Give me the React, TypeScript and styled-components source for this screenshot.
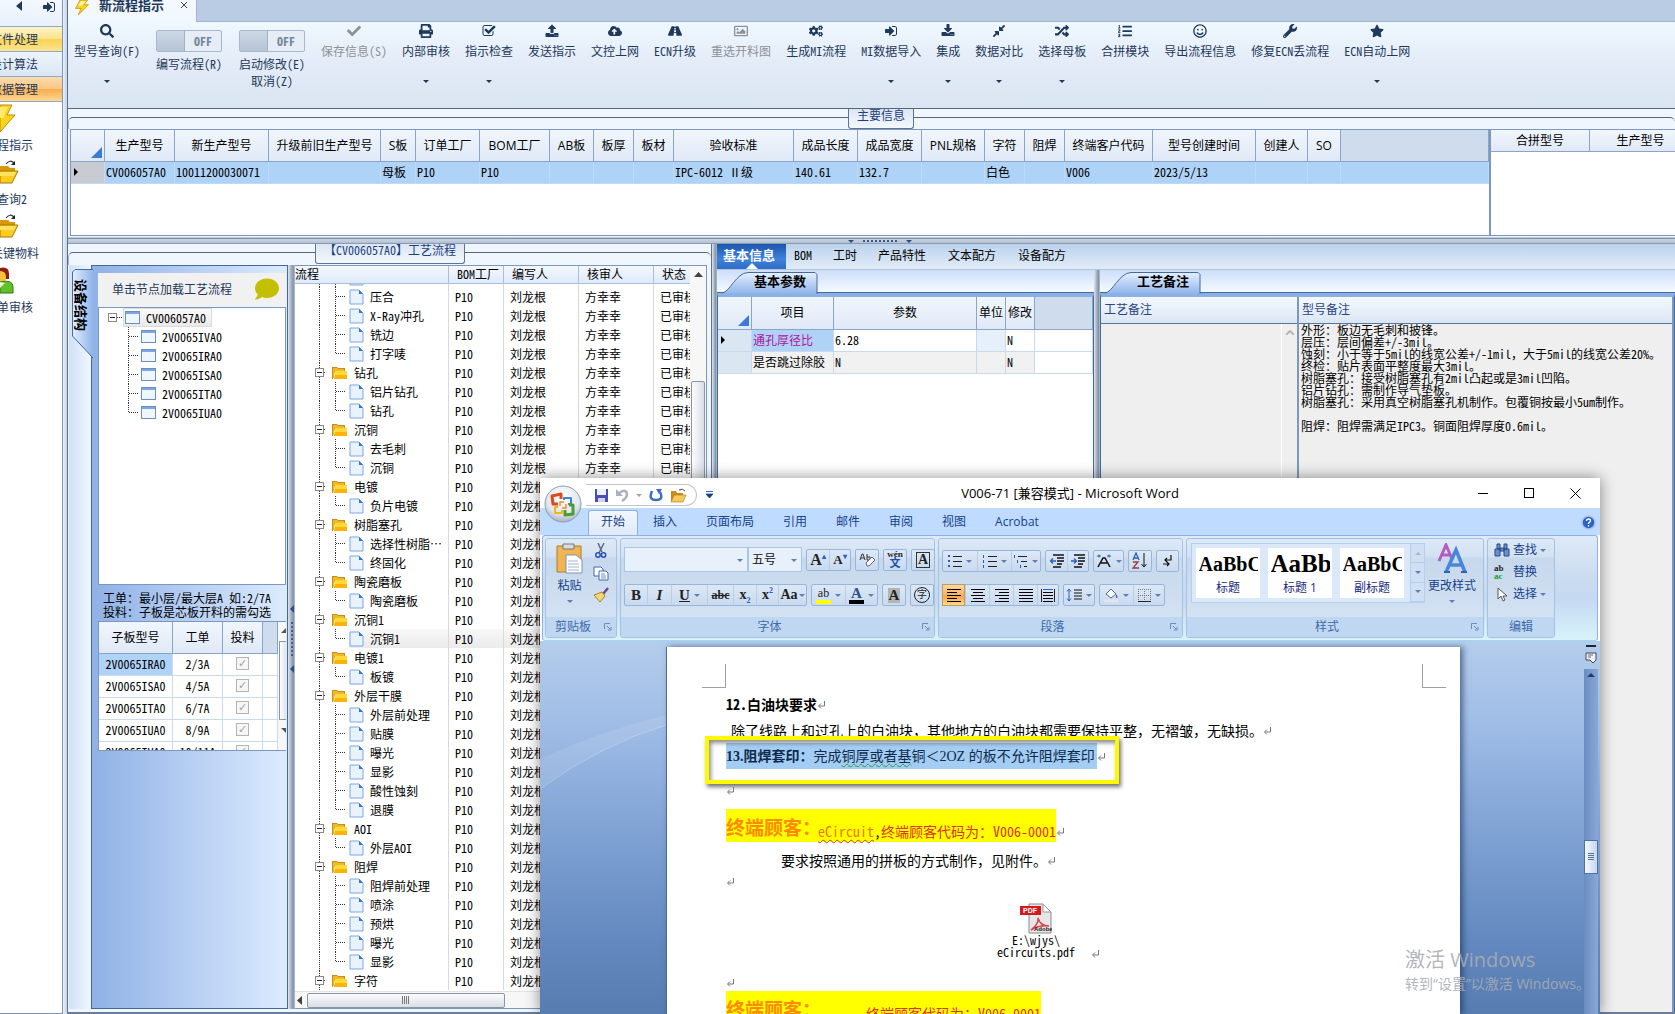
import React from "react";
import styled, { createGlobalStyle, css } from "styled-components";
import {
  FaSearch, FaCheck, FaPrint, FaCloudUploadAlt, FaRoad, FaRegImage, FaCogs, FaCompressAlt,
  FaRandom, FaListOl, FaRegSmile, FaWrench, FaStar, FaComment,
} from "react-icons/fa";

const SUN = `"Noto Sans Mono CJK SC", "Liberation Sans", "Noto Sans CJK SC", sans-serif`;
const UI = `"Open Sans", "Noto Sans CJK SC", sans-serif`;
const SERIF = `"Liberation Serif", "Noto Sans CJK SC", serif`;

const Global = createGlobalStyle`
  * { box-sizing: border-box; }
  html, body { margin: 0; height: 100%; overflow: hidden; }
  #root { height: 100%; }
  body { font: 12px/16px ${SUN}; color: #000; background: #dfe9f5; }
  button { font: inherit; color: inherit; background: none; border: 0; padding: 0; margin: 0; cursor: pointer; }
  table { border-collapse: separate; border-spacing: 0; table-layout: fixed; }
  th { font-weight: normal; }
  svg { display: block; flex: none; }
`;

/* ---------- shell ---------- */
const Desktop = styled.div`
  position: relative; display: flex; height: 100vh; overflow: hidden; white-space: nowrap;
`;
const Sidebar = styled.aside`
  flex: none; width: 63px; display: flex; flex-direction: column; background: #fff;
  border-right: 1px solid #7d97bd; border-bottom: 1px solid #7d97bd; overflow: hidden; color: #1e395b;
`;
const SideHead = styled.div`
  height: 27px; flex: none; display: flex; align-items: flex-start; justify-content: flex-end; gap: 20px;
  padding: 0 6px 0 0; border-bottom: 1px solid #8ea9cf; background: linear-gradient(#f4f8fe, #e7f0fb);
`;
const SideGroup = styled.button<{ $tone: "gold" | "blue" | "orange" }>`
  height: 25px; flex: none; display: flex; justify-content: flex-end; align-items: center; padding-right: 24px;
  border-bottom: 1px solid #8ea9cf; color: #1e395b;
  background: ${p => ({
    gold: "linear-gradient(#fdf3c8, #fbe48e 48%, #f9d155 50%, #fce58d)",
    blue: "linear-gradient(#edf4fc, #dbe7f5)",
    orange: "linear-gradient(#fbdcae, #fbc684 48%, #f9ab4b 50%, #fcd995)",
  })[p.$tone]};
`;
const SideItem = styled.button<{ $end: number }>`
  height: 54px; flex: none; display: flex; flex-direction: column; align-items: flex-end; color: #1e395b;
  padding: 2px ${p => p.$end}px 0 0; gap: 4px; overflow: visible;
  & > svg { align-self: flex-start; }
`;
const Gutter = styled.div`flex: none; width: 4px; background: linear-gradient(90deg, #e9f0f9, #c6d3e4);`;
const Main = styled.main`
  flex: 1; min-width: 0; display: flex; flex-direction: column; border-left: 1px solid #5b6e8c;
  border-bottom: 2px solid #6a7c98;
`;
const TabStrip = styled.div`height: 22px; flex: none; background: #b9cce4; border-bottom: 1px solid #9fb5d2; display: flex;`;
const PageTab = styled.div`
  width: 129px; height: 23px; background: linear-gradient(#f5f9fe, #f0f7fe); display: flex; align-items: flex-start;
  padding: 0 8px 0 6px; gap: 9px; font: bold 13px/10px ${SUN}; color: #1e395b; border-right: 1px solid #9fb5d2;
  span { flex: 1; }
`;
const Toolbar = styled.div`
  height: 86px; flex: none; display: flex; gap: 15px; padding: 0 6px; color: #1e395b;
  background: linear-gradient(#eff8fe, #e4ecf8 45%, #d9e5f1);
`;
const Tool = styled.button<{ $off?: boolean }>`
  display: flex; flex-direction: column; align-items: center; padding-top: 2px;
  color: ${p => (p.$off ? "#8e9196" : "#1e395b")};
  & > svg:first-child { height: 14px; width: 14px; margin-bottom: 5px; }
`;
const Caret = styled.i<{ $top?: number; $c?: string }>`
  display: inline-block; width: 0; height: 0; border: 3px solid transparent; border-bottom: 0;
  border-top-color: ${p => p.$c || "#1e395b"}; margin-top: ${p => p.$top || 0}px; flex: none;
`;
const Toggle = styled.label`
  width: 68px; display: flex; flex-direction: column; align-items: center; padding-top: 8px; text-align: center;
  line-height: 17px; gap: 3px;
`;
const Switch = styled.input`
  appearance: none; margin: 0; width: 66px; height: 22px; border: 1px solid #a9b8cb; border-radius: 2px; background: #e6edf6;
  display: flex; align-items: center;
  &::before { content: ""; width: 27px; height: 20px; background: linear-gradient(#cdd8e5, #b6c4d6); border-right: 1px solid #a0b0c5; }
  &::after { content: "OFF"; flex: 1; text-align: center; font: bold 12px/18px ${SUN}; color: #76869c; }
`;

/* ---------- group caption ---------- */
const CaptionRow = styled.div<{ $edge?: boolean }>`
  display: flex; height: 21px; flex: none; background: #f0f6fe;
  ${p => p.$edge && css`border-top: 1px solid #5b6577;`}
`;
const CapLine = styled.div<{ $g?: number; $side: "l" | "r" }>`
  flex: ${p => p.$g || 1} 1 0; margin-top: 8px; border-top: 1px solid #5b6577;
  ${p => (p.$side === "l"
    ? css`border-top-left-radius: 5px; border-left: 1px solid #9fb0c8;`
    : css`border-top-right-radius: 5px;`)}
`;
const Cap = styled.div`
  height: 20px; border: 1px solid #5f7396; border-top-width: 0; border-radius: 0 0 3px 3px; padding: 0 8px; line-height: 12px; color: #1e3f7f;
  background: linear-gradient(#dbe6f3, #f3f8fe);
`;

/* ---------- grids ---------- */
const Grids = styled.div`display: flex; height: 108px; flex: none; padding: 0 0 1px 2px; background: #eaf2fc;`;
const GridBox = styled.div<{ $w?: number }>`
  ${p => (p.$w ? css`flex: none; width: ${p.$w}px;` : css`flex: 1; min-width: 0;`)}
  background: #fff; border: 1px solid #7b98c0; border-right-width: ${p => (p.$w ? 0 : 1)}px; overflow: hidden;
`;
const Th = styled.th<{ $h?: number; $blank?: boolean }>`
  height: ${p => p.$h || 32}px; padding: 0; overflow: hidden; font-family: ${UI}; text-align: center;
  border-right: 1px solid #8ba4c8; border-bottom: 1px solid #8ba4c8;
  background: ${p => (p.$blank ? "#cfdcee" : "linear-gradient(#f1f6fd, #dfe9f6)")};
`;
const Corner = styled.span`
  display: block; margin: 14px 2px 0 auto; width: 0; height: 0; border-left: 11px solid transparent; border-bottom: 11px solid #3b7ad9;
`;
const Td = styled.td<{ $bg?: string; $center?: boolean; $color?: string; $line?: string }>`
  height: 22px; padding: 0 ${p => (p.$center ? 0 : 1)}px 2px; overflow: hidden; line-height: 16px;
  text-align: ${p => (p.$center ? "center" : "left")}; color: ${p => p.$color || "#000"};
  background: ${p => p.$bg || "#fff"};
  border-right: 1px solid ${p => p.$line || "#c9daf0"}; border-bottom: 1px solid ${p => p.$line || "#c9daf0"};
`;
const RowMark = styled.i`
  display: block; width: 0; height: 0; border: 4px solid transparent; border-left-color: #000; border-right: 0; margin-left: 2px;
`;
const HSplit = styled.div`
  height: 7px; flex: none; display: flex; justify-content: center; align-items: center; gap: 9px; padding: 1px 0 0 16px;
  background: linear-gradient(#e3eaf3, #5f7290 28%, #cbd5e2 36%, #b5c2d3 80%, #74869f);
`;
const Dots = styled.span<{ $v?: boolean }>`
  ${p => (p.$v ? css`height: 34px; border-left: 2px dotted #3d5a94;` : css`width: 34px; border-top: 2px dotted #3d5a94;`)}
`;

/* ---------- lower area ---------- */
const Lower = styled.div`flex: 1; min-height: 0; display: flex;`;
const FlowGroup = styled.section`flex: none; width: 644px; display: flex; flex-direction: column; background: #f0f6fe; border-right: 1px solid #5f7396;`;
const FlowBody = styled.div`flex: 1; min-height: 0; display: flex; padding: 0 4px 3px 1px;`;
const VStrip = styled.div`flex: none; width: 22px; padding-top: 4px; background: linear-gradient(90deg, #cfe0f9, #f1f7ff);`;
const VTab = styled.button`
  position: relative; display: block; margin-left: 2px; width: 20px; height: 90px; writing-mode: vertical-rl; text-orientation: sideways;
  font: bold 13px/20px ${SUN}; text-align: left; padding-top: 10px;
  svg { position: absolute; left: 0; top: 0; z-index: 0; }
  span { position: relative; }
`;
const DevicePanel = styled.div`
  flex: none; width: 197px; display: flex; flex-direction: column; padding: 7px 1px 0 6px; border: 1px solid #456a9f;
  background: linear-gradient(90deg, #8fb1e6, #dcebff);
`;
const Hint = styled.div`
  height: 34px; flex: none; display: flex; align-items: center; justify-content: space-between; background: #f1f1f1;
  padding: 0 7px 2px 14px; color: #1e395b;
`;
const TreeBox = styled.div`height: 278px; flex: none; background: #fff; border: 1px solid #7b98c0;`;
const TreeRow = styled.div<{ $child?: boolean }>`height: 19px; display: flex; align-items: center; padding-left: 9px;`;
const TreeName = styled.button<{ $sel?: boolean }>`
  display: flex; align-items: center; gap: 6px; height: 19px; line-height: 15px; padding: 0 5px 0 1px; border: 1px solid transparent;
  ${p => p.$sel && css`background: linear-gradient(#fbfbfb, #e9e9e9); border-color: #dcdcdc;`}
`;
const Note = styled.p`margin: 6px 0 2px; padding-left: 5px; font-size: 12px; line-height: 14px; white-space: nowrap;`;
const SubGrid = styled.div`height: 130px; flex: none; display: flex; border: 1px solid #7b98c0; border-right: 0; background: #fff; overflow: hidden;`;
const Check = styled.input`
  appearance: none; display: block; margin: 0 auto; width: 13px; height: 13px; border: 1px solid #b4b4b4; background: #f6f6f6;
  &::after { content: "✓"; display: block; font: bold 11px/11px "DejaVu Sans", sans-serif; color: #a3a3a3; text-align: center; }
`;
const ThinScroll = styled.div`
  flex: 1; display: flex; flex-direction: column; align-items: flex-end; background: #f7f7f7; overflow: hidden; padding-top: 6px; gap: 8px;
  i { flex: none; width: 7px; height: 79px; border: 1px solid #8a95a5; border-right: 0; background: linear-gradient(90deg, #fdfdfe, #dfe4ec); }
`;
const VSplit = styled.div<{ $w: number }>`
  flex: none; width: ${p => p.$w}px; display: flex; flex-direction: column; align-items: center; gap: 9px;
  background: linear-gradient(90deg, #dfe6ee, #a5b1c1 45%, #8593a8 75%, #b6c3d4);
`;
const SideCaret = styled.i`width: 0; height: 0; border: 4px solid transparent; border-right-color: #2b4c8c; border-left: 0;`;

const FlowPane = styled.div`flex: 1; min-width: 0; display: flex; flex-direction: column; background: #fff; border: 1px solid #7b98c0; border-left: 0;`;
const FlowMain = styled.div`flex: 1; min-height: 0; display: flex;`;
const FlowClip = styled.div`flex: 1; min-width: 0; overflow: hidden; display: flex; flex-direction: column;`;
const FlowRows = styled.div`flex: 1; min-height: 0; overflow: hidden; display: flex; flex-direction: column; justify-content: flex-end; padding-bottom: 1px;`;
const FlowTable = styled.table`width: 414px; flex: none;`;
const Fh = styled.th<{ $p: number }>`
  height: 18px; padding: 0 0 2px ${p => p.$p}px; text-align: left; line-height: 15px; overflow: hidden;
  background: linear-gradient(#f4f8fd, #dfeafa); border-right: 1px solid #a9bfdf; border-bottom: 1px solid #a9bfdf;
`;
const Fd = styled.td<{ $sel?: boolean }>`
  height: 19px; padding: 0 0 0 6px; overflow: hidden; line-height: 17px; border-right: 1px solid #d9d9d9;
  background: ${p => (p.$sel ? "linear-gradient(#f8f8f8, #ebebeb)" : "#fff")};
`;
const FlowName = styled.div`display: flex; align-items: center; gap: 5px; height: 19px; margin-left: -6px; background: #fff;`;
const FlowLabel = styled.span<{ $sel?: boolean; $leaf: boolean }>`
  flex: 1; display: flex; align-items: center; gap: 6px; height: 19px; overflow: hidden; margin-left: ${p => (p.$leaf ? -5 : 0)}px;
  background: ${p => (p.$sel ? "linear-gradient(#f8f8f8, #ebebeb)" : "#fff")};
`;
const VBar = styled.div`
  flex: none; width: 16px; background: #f7f7f8; display: flex; flex-direction: column; align-items: center; padding-top: 6px;
  b { margin-top: 104px; width: 14px; flex: 1; border: 1px solid #8a95a5; border-radius: 2px; background: linear-gradient(90deg, #fbfcfd, #d9dfe8); }
`;
const HBar = styled.div`
  height: 17px; flex: none; display: flex; align-items: center; gap: 5px; padding-left: 2px; background: #f7f7f8; border-top: 1px solid #e3e3e3;
  b { width: 198px; height: 15px; border: 1px solid #8a95a5; border-radius: 2px; background: linear-gradient(#fbfcfd, #d9dfe8);
    display: flex; justify-content: center; align-items: center; }
  b i { width: 8px; height: 8px; background: repeating-linear-gradient(90deg, #777 0 1px, transparent 1px 2px); }
`;

/* ---------- right side ---------- */
const Right = styled.section`flex: 1; min-width: 0; display: flex; flex-direction: column;`;
const InfoTabs = styled.div`height: 26px; flex: none; display: flex; background: linear-gradient(#bcd2ec, #e1ecf8); border-bottom: 1px solid #b4c7d9;`;
const InfoTab = styled.button<{ $on?: boolean; $l: number }>`
  position: relative; line-height: 22px; display: flex; padding: 0 0 0 ${p => p.$l}px;
  ${p => p.$on && css`
    width: 69px; font: bold 13px/22px ${SUN}; color: #fff; background: linear-gradient(#1b55ad, #3f83dc 60%, #2f6cc6);
    &::after { content: ""; position: absolute; left: 29px; bottom: 0; border: 6px solid transparent; border-top: 0; border-bottom-color: #fff; }
  `}
`;
const Panes = styled.div`flex: 1; min-height: 0; display: flex;`;
const Pane = styled.div<{ $w?: number }>`
  ${p => (p.$w ? css`flex: none; width: ${p.$w}px;` : css`flex: 1; min-width: 0;`)}
  display: flex; flex-direction: column;
`;
const PaneTabs = styled.div`height: 23px; flex: none; background: linear-gradient(#cbdefa, #f6faff); padding: 2px 0 0 5px; border-bottom: 1px solid #456a9f;`;
const PaneTab = styled.button`
  position: relative; display: block; width: 96px; height: 21px; font: bold 13px/18px ${SUN}; text-align: left; padding: 0 0 3px 32px;
  svg { position: absolute; left: 0; top: 0; }
  span { position: relative; }
`;
const PaneBody = styled.div`
  flex: 1; min-height: 0; border: 1px solid #456a9f; border-top: 4px solid #8bb0e6; border-bottom: 0; background: #fff; display: flex; overflow: hidden;
`;
const Memo = styled.div<{ $w?: number }>`
  ${p => (p.$w ? css`flex: none; width: ${p.$w}px;` : css`flex: 1; min-width: 0;`)}
  display: flex; flex-direction: column; border-right: 2px solid #7b98c0; background: #efefef;
`;
const MemoHead = styled.label`
  height: 27px; flex: none; line-height: 23px; padding-left: 3px; color: #2a4480; background: linear-gradient(#f4f9ff, #dbe6f3); border-bottom: 1px solid #57769f;
`;
const MemoBody = styled.div`flex: 1; display: flex; min-height: 0;`;
const MemoText = styled.textarea`
  flex: 1; min-width: 0; border: 0; margin: 0; padding: 0 2px; resize: none; outline: 0; background: #efefef; font: 12px/12px ${SUN};
  white-space: pre; overflow: hidden;
`;
const MemoScroll = styled.div`width: 16px; border-left: 1px solid #fff; padding: 6px 0 0 4px;`;

/* ---------- word window ---------- */
const WordWin = styled.section`
  position: absolute; left: 540px; right: 75px; top: 478px; bottom: 0; display: flex; flex-direction: column; background: #fff;
  box-shadow: 0 0 14px rgba(0, 0, 0, 0.45); font: 12px/16px ${UI}; color: #15428b;
`;
const TitleBar = styled.header`
  height: 30px; flex: none; display: grid; grid-template-columns: 1fr auto 1fr; align-items: center; color: #000; font-size: 13px;
`;
const OfficeButton = styled.button`position: absolute; left: 4px; top: 7px; z-index: 2;`;
const Quick = styled.div`display: flex; align-items: center; gap: 9px; padding: 4px 0 0 46px;`;
const QuickPill = styled.div`
  flex: none; width: 111px; height: 22px; display: flex; align-items: center; gap: 7px; padding-left: 8px; border: 1px solid #c3c7cd;
  border-left: 0; border-radius: 0 11px 11px 0;
`;
const WinButtons = styled.div`display: flex; justify-content: flex-end; padding-right: 2px; button { width: 46px; height: 30px; display: grid; place-items: center; }`;
const RibbonTabs = styled.nav`
  height: 27px; flex: none; display: flex; padding: 2px 4px 0 48px; background: #bfdbff; align-items: stretch;
`;
const RibbonTab = styled.button<{ $on?: boolean }>`
  padding: 0 14px 2px; margin-right: 1px; color: #15428b; line-height: 20px; border-radius: 3px 3px 0 0;
  ${p => p.$on && css`background: linear-gradient(#f2f7fe, #dfeaf8); border: 1px solid #8db2e3; border-bottom: 0; padding: 0 12px 2px;`}
`;
const HelpSlot = styled.button`margin-left: auto; align-self: center;`;
const Ribbon = styled.div`
  height: 106px; flex: none; display: flex; gap: 3px; margin: 0 2px; padding: 2px; border: 1px solid #8db2e3; border-bottom-color: #9fd8ee; border-radius: 3px;
  background: linear-gradient(#dfeaf7, #cbdcf0 40%, #c5d9f1 60%, #d8f3fb);
`;
const RGroup = styled.div<{ $w: number }>`
  flex: none; width: ${p => p.$w}px; display: flex; flex-direction: column; border: 1px solid #a5c2e2; border-radius: 3px;
  background: linear-gradient(#dde9f6, #d2e1f2 18%, #c7d8ec 20%, #d6e5f5);
`;
const RBody = styled.div<{ $col?: boolean }>`flex: 1; min-height: 0; display: flex; flex-direction: ${p => (p.$col ? "column" : "row")};`;
const RCap = styled.div`
  height: 20px; flex: none; display: flex; align-items: center; background: #bfd7f1; color: #3e6aaa; line-height: 18px; border-radius: 0 0 3px 3px;
  span { flex: 1; text-align: center; }
  svg { margin: 0 4px; }
`;
const RRow = styled.div`display: flex; align-items: center; gap: 4px; padding: 0 3px;`;
const RCluster = styled.div`display: flex; height: 22px; border: 1px solid #98b6dc; border-radius: 2px; background: linear-gradient(#dce8f6, #c9daef);`;
const RBtn = styled.button<{ $w?: number; $on?: boolean }>`
  width: ${p => p.$w || 22}px; display: flex; align-items: center; justify-content: center; gap: 4px; color: #222;
  & + & { border-left: 1px solid #b9cde6; }
  ${p => p.$on && css`background: linear-gradient(#fbd9a3, #f9a94a 60%, #fdd98a); border: 1px solid #c29b5c; margin: -1px 0 -1px -1px;`}
`;
const G = styled.span<{ $s?: number; $b?: boolean; $i?: boolean; $u?: boolean; $x?: boolean; $c?: string }>`
  font: ${p => (p.$i ? "italic " : "")}${p => (p.$b === false ? "normal" : "bold")} ${p => p.$s || 15}px/18px ${SERIF};
  color: ${p => p.$c || "#222"};
  text-decoration: ${p => (p.$u ? "underline" : p.$x ? "line-through" : "none")};
  sub, sup { font-size: 8px; line-height: 0; color: #2b5fb8; }
`;
const Combo = styled.select<{ $w: number }>`
  width: ${p => p.$w}px; height: 25px; appearance: none; border: 1px solid #a9c5e8; border-radius: 0; background: #e8f0fb; padding: 0 3px;
  font: 12px/20px ${UI}; color: #111; margin: 0;
`;
const ComboWrap = styled.span`position: relative; display: flex; & > i { position: absolute; right: 5px; top: 12px; }`;
const Stack = styled.button`display: flex; flex-direction: column; align-items: center; color: #15428b;`;
const IconCol = styled.div`display: flex; flex-direction: column; gap: 6px; button { display: block; }`;
const Gallery = styled.div`display: flex; gap: 8px; height: 60px; padding: 4px 0 4px 4px; border: 1px solid #b6cfee; background: #dae8f8;`;
const StyleCard = styled.button`
  width: 64px; height: 50px; background: #fff; display: flex; flex-direction: column; align-items: center; overflow: hidden; color: #1a2a80;
  line-height: 16px;
`;
const Sample = styled.span<{ $s: number }>`
  display: block; width: 59px; overflow: hidden; text-align: left; font: bold ${p => p.$s}px/32px ${SERIF}; color: #000;
`;
const GScroll = styled.div`
  margin: -4px 0 -4px -2px; width: 14px; display: flex; flex-direction: column; border-left: 1px solid #b6cfee;
  button { flex: 1; display: grid; place-items: center; border-bottom: 1px solid #b6cfee; background: #cfe0f4; }
`;
const EditBtn = styled.button`display: flex; align-items: center; gap: 3px; height: 22px; color: #15428b;`;

const DocArea = styled.div`
  position: relative; flex: 1; min-height: 0; display: flex; justify-content: flex-end; padding-top: 6px; overflow: hidden;
  background: linear-gradient(#b4cdec, #a0bde6 22%, #86a8d8 45%, #6389c0 80%, #567cb0);
  & > svg { position: absolute; left: 0; top: 0; }
`;
const Paper = styled.article`
  position: relative; flex: 1; margin: 0 140px 0 126px; background: #fff; border-left: 1px solid #4b6c9b; color: #000;
  box-shadow: 3px 0 6px rgba(20, 45, 90, 0.6); padding-left: 59px; overflow: hidden; font: 14px/26px ${SUN};
`;
const Crops = styled.div`
  display: flex; justify-content: space-between; height: 24px; margin: 17px 14px 3px -24px;
  i { width: 24px; border: 0 solid #a0a0a0; border-bottom-width: 1px; }
  i:first-child { border-right-width: 1px; }
  i:last-child { border-left-width: 1px; }
`;
const Para = styled.p<{ $h?: number; $mt?: number; $in?: number; $low?: boolean }>`
  position: relative; margin: ${p => p.$mt || 0}px 0 0; padding-left: ${p => p.$in || 0}px; height: ${p => p.$h || 26}px;
  line-height: ${p => p.$h || 26}px; display: flex; align-items: ${p => (p.$low ? "flex-end" : "center")};
  ${p => p.$low && css`& > svg { margin-bottom: 6px; }`}
`;
const Sel = styled.span`background: #a3cdf2; color: #0f2a4d; height: 26px; line-height: 28px; font-family: ${SERIF}; padding-right: 2px;
  u { text-decoration: underline wavy #2c9a4b 1px; text-underline-offset: 2px; }`;
const Callout = styled.div`
  position: absolute; left: -21px; top: -7px; width: 414px; height: 48px; border: 4px solid #fdf900;
  box-shadow: 2px 3px 4px rgba(0, 0, 0, 0.55), inset 2px 3px 4px rgba(0, 0, 0, 0.45);
`;
const Mark = styled.span`
  background: #ff0; height: 33px; display: flex; align-items: flex-end; line-height: 22px; color: #e0301e;
  strong { font: bold 19px/26px ${SERIF}; color: #ff8a00; width: 92px; }
  u { color: #f07800; text-decoration: underline wavy #c0392b 1px; text-underline-offset: 2px; }
  em { font-style: normal; color: #000; }
`;
const Space = styled.span`width: 48px;`;
const Attach = styled.div`
  display: flex; align-items: flex-end; margin: 8px 0 2px 271px; gap: 16px; height: 58px; font-size: 12px; line-height: 12px;
  a { width: 78px; display: flex; flex-direction: column; align-items: center; color: #000; text-decoration: none; text-align: center; gap: 0; }
`;
const WordScroll = styled.div`
  position: absolute; right: 2px; top: 4px; bottom: 0; width: 14px; display: flex; flex-direction: column; align-items: center; gap: 5px;
`;
const Track = styled.div`
  flex: 1; width: 14px; background: linear-gradient(90deg, #6a8dc2, #89a8d6); display: flex; flex-direction: column; align-items: center; padding-top: 4px;
  b { margin-top: 163px; width: 14px; height: 34px; border: 1px solid #52709f; background: linear-gradient(90deg, #f4f8fd, #c5d6ee); display: grid; place-items: center; }
  b i { width: 6px; height: 8px; background: repeating-linear-gradient(#54719f 0 1px, transparent 1px 2px); }
`;
const Activate = styled.div`
  position: absolute; left: 1405px; bottom: 20px; color: rgba(168, 172, 180, 0.9); font: 14px/20px ${UI};
  strong { display: block; font: normal 20px/28px ${UI}; }
`;

/* ---------- drawings ---------- */
const Fa = ({ d }: { d: string }) => <svg viewBox="0 0 1792 1792" width="14" height="14" fill="currentColor"><path d={d} /></svg>;
const P_CHECKSQ = "M1472 930v318q0 119-84.5 203.5t-203.5 84.5h-832q-119 0-203.5-84.5t-84.5-203.5v-832q0-119 84.5-203.5t203.5-84.5h832q63 0 117 25 15 7 18 23 3 17-9 29l-49 49q-10 10-23 10-3 0-9-2-23-6-45-6h-832q-66 0-113 47t-47 113v832q0 66 47 113t113 47h832q66 0 113-47t47-113v-254q0-13 9-22l64-64q10-10 23-10 6 0 12 3 20 8 20 29zm231-489l-814 814q-24 24-57 24t-57-24l-430-430q-24-24-24-57t24-57l110-110q24-24 57-24t57 24l263 263 647-647q24-24 57-24t57 24l110 110q24 24 24 57t-24 57z";
const P_SIGNIN = "M1312 896q0 26-19 45l-544 544q-19 19-45 19t-45-19-19-45v-288h-448q-26 0-45-19t-19-45v-384q0-26 19-45t45-19h448v-288q0-26 19-45t45-19 45 19l544 544q19 19 19 45zm352-352v704q0 119-84.5 203.5t-203.5 84.5h-320q-13 0-22.5-9.5t-9.5-22.5q0-4-1-20t-.5-26.5 3-23.5 10-19.5 20.5-6.5h320q66 0 113-47t47-113v-704q0-66-47-113t-113-47h-312l-11.5-1-11.5-3-8-5.5-7-9-2-13.5q0-4-1-20t-.5-26.5 3-23.5 10-19.5 20.5-6.5h320q119 0 203.5 84.5t84.5 203.5z";
const P_UPLOAD = "M1344 1472q0-26-19-45t-45-19-45 19-19 45 19 45 45 19 45-19 19-45zm256 0q0-26-19-45t-45-19-45 19-19 45 19 45 45 19 45-19 19-45zm128-224v320q0 40-28 68t-68 28h-1472q-40 0-68-28t-28-68v-320q0-40 28-68t68-28h427q21 56 70.5 92t110.5 36h256q61 0 110.5-36t70.5-92h427q40 0 68 28t28 68zm-325-648q-17 40-59 40h-256v448q0 26-19 45t-45 19h-256q-26 0-45-19t-19-45v-448h-256q-42 0-59-40-17-39 14-69l448-448q18-19 45-19t45 19l448 448q31 30 14 69z";
const P_DOWNLOAD = "M1344 1344q0-26-19-45t-45-19-45 19-19 45 19 45 45 19 45-19 19-45zm256 0q0-26-19-45t-45-19-45 19-19 45 19 45 45 19 45-19 19-45zm128-224v320q0 40-28 68t-68 28h-1472q-40 0-68-28t-28-68v-320q0-40 28-68t68-28h465l135 136q58 56 136 56t136-56l136-136h464q40 0 68 28t28 68zm-325-569q17 41-14 70l-448 448q-18 19-45 19t-45-19l-448-448q-31-29-14-70 17-39 59-39h256v-448q0-26 19-45t45-19h256q26 0 45 19t19 45v448h256q42 0 59 39z";

const Bolt = ({ w, h }: { w: number; h: number }) => (
  <svg width={w} height={h} viewBox="0 0 16 16"><path d="M6 0h8l-4 5h5L4 16l3-7H1z" fill="#fbd41c" stroke="#c89005" strokeWidth="0.8" /><path d="M7 1h5L8 6H4z" fill="#fff3a0" /></svg>
);
const BoltCut = () => <svg width="16" height="29" viewBox="0 0 16 29"><path d="M0 1h12L7 11h8L0 28z" fill="#fbd41c" stroke="#c08a10" /><path d="M0 3h8L3 14H0z" fill="#ffea6b" /></svg>;
const FolderCut = () => (
  <svg width="19" height="29" viewBox="0 0 19 29">
    <path d="M6 6q4-5 8-1" fill="none" stroke="#333" strokeWidth="1.2" /><path d="M11 7h4V3z" fill="#222" />
    <path d="M0 8h8l2 2h5v5H0z" fill="#d9980c" /><path d="M0 13h18l-6 12H0z" fill="#fccd1e" stroke="#a8740a" /><path d="M0 14h16l-2 4H0z" fill="#ffe35a" />
  </svg>
);
const UserCut = () => (
  <svg width="14" height="29" viewBox="0 0 14 29">
    <path d="M0 2q9-2 9 6v5H0z" fill="#8c1f10" /><path d="M0 5q6 0 6 6t-6 7z" fill="#f5c33a" /><path d="M0 16q13-3 13 5v6H0z" fill="#63bf2b" stroke="#2b7d0e" /><path d="M0 16l5 1-5 5z" fill="#e9f5d8" />
  </svg>
);
const WinIcon = () => (
  <svg width="15" height="13" viewBox="0 0 15 13"><rect x=".5" y=".5" width="14" height="12" fill="#eef6ff" stroke="#6b8fbf" /><path d="M1 1h13v2H1z" fill="#7fa6e4" /></svg>
);
const DocIcon = () => (
  <svg width="15" height="16" viewBox="0 0 15 16"><path d="M1 1h9l4 4v10H1z" fill="#e9f3ff" stroke="#7ba6e2" /><path d="M10 1v4h4z" fill="#2f73dd" /></svg>
);
const Folder = () => (
  <svg width="17" height="14" viewBox="0 0 17 14"><path d="M1 1h5l1 1h7v3H4L2 13H1z" fill="#c98f12" /><path d="M2 2h4l1 1h6v2H3v7H2z" fill="#f0b92a" /><path d="M4 5h12v8H3z" fill="#ffd83a" /><path d="M4 9h12v4H3z" fill="#fbb305" /></svg>
);
const dash = { stroke: "#333", strokeDasharray: "1 1", shapeRendering: "crispEdges" as const };
const Box = ({ x }: { x: number }) => (
  <g shapeRendering="crispEdges"><rect x={x + 0.5} y="5.500" width="8" height="8" fill="#fff" stroke="#8a8a8a" /><path d={`M${x + 2} 9.500h5`} stroke="#222" /></g>
);
const FolderGuide = () => <svg width="31" height="19"><path d="M24.500 0v19M29 9.500h4" {...dash} /><Box x={20} /></svg>;
const LeafGuide = ({ last }: { last?: boolean }) => (
  <svg width="54" height="19"><path d={`M24.500 0v19M40.500 0v${last ? 10 : 19}M41 9.500h9`} fill="none" {...dash} /></svg>
);
const RootGuide = () => <svg width="15" height="19"><path d="M9 9.500h6" {...dash} /><Box x={0} /></svg>;
const KidGuide = ({ last }: { last: boolean }) => <svg width="31" height="19"><path d={`M20.500 0v${last ? 10 : 19}M21 9.500h9`} fill="none" {...dash} /></svg>;
const SlantTab = ({ id }: { id: string }) => (
  <svg width="96" height="22">
    <defs><linearGradient id={id} x1="0" y1="0" x2="0" y2="1"><stop offset="0" stopColor="#e6f0fe" /><stop offset="1" stopColor="#8fb4ea" /></linearGradient></defs>
    <path d="M0 21C8 20 14 1 26 .5H93l2 2V22" fill={`url(#${id})`} stroke="#456a9f" />
  </svg>
);
const Ret = () => <svg width="9" height="9" viewBox="0 0 9 9"><path d="M7.500 1v5H2M4 3.500L1.500 6 4 8.500" fill="none" stroke="#777" /></svg>;
const Launch = () => <svg width="8" height="8" viewBox="0 0 8 8"><path d="M.5 6V.5H6M3 3l3 3M7 4v3H4" fill="none" stroke="#6a8bbb" /></svg>;
const Lines = ({ m }: { m: "l" | "c" | "r" | "j" | "d" }) => {
  const x = { l: 0, c: 2, r: 4, j: 0, d: 0 }[m];
  const w = m === "j" || m === "d" ? 14 : 10;
  return (
    <svg width="14" height="13" viewBox="0 0 14 13" shapeRendering="crispEdges">
      {[0, 1, 2, 3, 4].map(i => <rect key={i} x={m === "d" ? 2 : i % 2 ? x : 0} y={i * 3} width={m === "d" ? 10 : i % 2 ? w : 14} height="1" fill={m === "d" && !i ? "#2b5fb8" : "#000"} />)}
      {m === "d" && <path d="M.5 0v13M13.500 0v13" stroke="#222" />}
    </svg>
  );
};
const ListIcon = ({ n }: { n: number }) => (
  <svg width="14" height="13" viewBox="0 0 14 13" shapeRendering="crispEdges">
    {[0, 1, 2].map(i => <g key={i}><rect x={n === 2 ? i * 3 : 0} y={i * 5} width={n ? 1 : 2} height={n ? 3 : 2} fill="#2b5fb8" /><rect x={n === 2 ? 4 + i * 3 : 5} y={i * 5 + 1} width={n === 2 ? 9 - i * 3 : 9} height="1" fill="#222" /></g>)}
  </svg>
);
const Indent = ({ r }: { r?: boolean }) => (
  <svg width="14" height="14" viewBox="0 0 14 14"><path d="M3 1h11M7 4h7M7 7h7M7 10h5M3 13h8" stroke="#111" strokeWidth="1.4" /><path d={r ? "M0 7h5M3 4.500L5.500 7 3 9.500" : "M6 7H1M3 4.500L.5 7 3 9.500"} fill="none" stroke="#2b5fb8" strokeWidth="1.3" /></svg>
);
const OfficeLogo = () => (
  <svg width="38" height="38" viewBox="0 0 38 38">
    <defs><radialGradient id="orb" cx=".5" cy=".3" r=".8"><stop offset="0" stopColor="#fff" /><stop offset=".6" stopColor="#dfe6ee" /><stop offset="1" stopColor="#8f9cae" /></radialGradient></defs>
    <circle cx="19" cy="19" r="18" fill="url(#orb)" stroke="#8f9bb0" />
    <g fill="none" strokeLinejoin="round">
      <path d="M14 19H9l-1-8 9-2v5" stroke="#dd4a1d" strokeWidth="3" />
      <path d="M20 15v-2h7v6h-3" stroke="#3f86d8" strokeWidth="2" />
      <path d="M14 22h-3v6h7v-3" stroke="#f3b51b" strokeWidth="2" />
      <path d="M25 20h4v9l-8 1v-5" stroke="#4c9c34" strokeWidth="3" />
      <path d="M16 21v-4h4M22 19v4h-4" stroke="#f08a24" strokeWidth="1.500" />
    </g>
  </svg>
);

/* ---------- data ---------- */
const tools: { t: string; icon: React.ReactNode; caret?: boolean; off?: boolean }[] = [
  { t: "保存信息(S)", icon: <FaCheck />, off: true },
  { t: "内部审核", icon: <FaPrint />, caret: true },
  { t: "指示检查", icon: <Fa d={P_CHECKSQ} />, caret: true },
  { t: "发送指示", icon: <Fa d={P_UPLOAD} /> },
  { t: "文控上网", icon: <FaCloudUploadAlt /> },
  { t: "ECN升级", icon: <FaRoad /> },
  { t: "重选开料图", icon: <FaRegImage />, off: true },
  { t: "生成MI流程", icon: <FaCogs /> },
  { t: "MI数据导入", icon: <Fa d={P_SIGNIN} />, caret: true },
  { t: "集成", icon: <Fa d={P_DOWNLOAD} />, caret: true },
  { t: "数据对比", icon: <FaCompressAlt />, caret: true },
  { t: "选择母板", icon: <FaRandom />, caret: true },
  { t: "合拼模块", icon: <FaListOl /> },
  { t: "导出流程信息", icon: <FaRegSmile /> },
  { t: "修复ECN丢流程", icon: <FaWrench /> },
  { t: "ECN自动上网", icon: <FaStar />, caret: true },
];
const cols: [string, number, string][] = [
  ["生产型号", 70, "CV006057A0"], ["新生产型号", 94, "10011200030071"], ["升级前旧生产型号", 112, ""], ["S板", 35, "母板"],
  ["订单工厂", 64, "P10"], ["BOM工厂", 70, "P10"], ["AB板", 44, ""], ["板厚", 40, ""], ["板材", 40, ""], ["验收标准", 120, "IPC-6012 Ⅱ级"],
  ["成品长度", 64, "140.61"], ["成品宽度", 64, "132.7"], ["PNL规格", 63, ""], ["字符", 40, "白色"], ["阻焊", 40, ""],
  ["终端客户代码", 88, "V006"], ["型号创建时间", 103, "2023/5/13"], ["创建人", 52, ""], ["SO", 33, ""],
];
const flow: [string, string[]][] = [
  ["", ["", "压合", "X-Ray冲孔", "铣边", "打字唛"]], ["钻孔", ["铝片钻孔", "钻孔"]], ["沉铜", ["去毛刺", "沉铜"]], ["电镀", ["负片电镀"]],
  ["树脂塞孔", ["选择性树脂…", "终固化"]], ["陶瓷磨板", ["陶瓷磨板"]], ["沉铜1", ["沉铜1"]], ["电镀1", ["板镀"]],
  ["外层干膜", ["外层前处理", "贴膜", "曝光", "显影", "酸性蚀刻", "退膜"]], ["AOI", ["外层AOI"]],
  ["阻焊", ["阻焊前处理", "喷涂", "预烘", "曝光", "显影"]], ["字符", []],
];
const rows = flow.flatMap(([f, kids]) => [
  ...(f ? [{ name: f, folder: true, last: false, sel: false }] : []),
  ...kids.map((k, i) => ({ name: k, folder: false, last: i === kids.length - 1, sel: f === "沉铜1" })),
]);
const notes = `外形：板边无毛刺和披锋。
层压：层间偏差+/-3mil。
蚀刻：小于等于5mil的线宽公差+/-1mil，大于5mil的线宽公差20%。
终检：贴片表面平整度最大3mil。
树脂塞孔：接受树脂塞孔有2mil凸起或是3mil凹陷。
铝片钻孔：需制作导气垫板。
树脂塞孔：采用真空树脂塞孔机制作。包覆铜按最小5um制作。

阻焊：阻焊需满足IPC3。铜面阻焊厚度0.6mil。`;

const FlowCols = () => <colgroup>{[154, 55, 75, 75, 55].map((w, i) => <col key={i} style={{ width: w }} />)}</colgroup>;

/* ---------- sections ---------- */
const Left = () => (
  <Sidebar>
    <SideHead>
      <svg width="6" height="12" viewBox="0 0 6 12"><path d="M6 1v10L0 6z" fill="#1e395b" /></svg>
      <Fa d={P_SIGNIN} />
    </SideHead>
    <SideGroup $tone="gold">文件处理</SideGroup>
    <SideGroup $tone="blue">设计算法</SideGroup>
    <SideGroup $tone="orange">数据管理</SideGroup>
    <SideItem $end={29}><BoltCut />流程指示</SideItem>
    <SideItem $end={35}><FolderCut />查询2</SideItem>
    <SideItem $end={23}><FolderCut />关键物料</SideItem>
    <SideItem $end={29}><UserCut />订单审核</SideItem>
  </Sidebar>
);

const Top = () => (
  <>
    <TabStrip>
      <PageTab><Bolt w={16} h={15} /><span>新流程指示</span>
        <button aria-label="关闭"><svg width="8" height="10" viewBox="0 0 8 10"><path d="M1 2l6 6M7 2L1 8" stroke="#444" /></svg></button>
      </PageTab>
    </TabStrip>
    <Toolbar>
      <Tool><FaSearch />型号查询(F)<Caret $top={21} /></Tool>
      <Toggle><Switch type="checkbox" role="switch" />编写流程(R)</Toggle>
      <Toggle><Switch type="checkbox" role="switch" /><span>启动修改(E)<br />取消(Z)</span></Toggle>
      {tools.map(t => <Tool key={t.t} $off={t.off}>{t.icon}{t.t}{t.caret && <Caret $top={21} />}</Tool>)}
    </Toolbar>
    <CaptionRow $edge><CapLine $side="l" $g={781} /><Cap>主要信息</Cap><CapLine $side="r" $g={763} /></CaptionRow>
    <Grids>
      <GridBox>
        <table style={{ width: "100%" }}>
          <colgroup><col style={{ width: 34 }} />{cols.map(c => <col key={c[0]} style={{ width: c[1] }} />)}<col /></colgroup>
          <thead><tr><Th><Corner /></Th>{cols.map(c => <Th key={c[0]}>{c[0]}</Th>)}<Th $blank /></tr></thead>
          <tbody><tr><Td $bg="#c8ccd2"><RowMark /></Td>{cols.map(c => <Td key={c[0]} $bg="#afd2f7" $line="#bddaf8">{c[2]}</Td>)}<Td $bg="#afd2f7" $line="#bddaf8" /></tr></tbody>
        </table>
      </GridBox>
      <GridBox $w={185}>
        <table style={{ width: 201 }}><colgroup><col style={{ width: 99 }} /><col /></colgroup>
          <thead><tr><Th $h={22}>合拼型号</Th><Th $h={22}>生产型号</Th></tr></thead></table>
      </GridBox>
    </Grids>
    <HSplit><Caret $c="#2b4c8c" /><Dots /><Caret $c="#2b4c8c" /></HSplit>
  </>
);

const Flow = () => (
  <FlowGroup>
    <CaptionRow><CapLine $side="l" /><Cap>【CV006057A0】工艺流程</Cap><CapLine $side="r" /></CaptionRow>
    <FlowBody>
      <VStrip>
        <VTab>
          <svg width="22" height="90"><defs><linearGradient id="vt"><stop offset="0" stopColor="#e3eefd" /><stop offset="1" stopColor="#8fb4ea" /></linearGradient></defs>
            <path d="M22 .5H4L1.500 3V67L22 89" fill="url(#vt)" stroke="#456a9f" /></svg>
          <span>设备结构</span>
        </VTab>
      </VStrip>
      <DevicePanel>
        <Hint>单击节点加载工艺流程<FaComment size={24} color="#c4bf00" /></Hint>
        <TreeBox>
          <TreeRow><RootGuide /><TreeName $sel><WinIcon />CV006057A0</TreeName></TreeRow>
          {["IVA0", "IRA0", "ISA0", "ITA0", "IUA0"].map((k, i) => (
            <TreeRow key={k}><KidGuide last={i === 4} /><TreeName><WinIcon />2V0065{k}</TreeName></TreeRow>
          ))}
        </TreeBox>
        <Note>工单：最小层/最大层A 如:2/7A<br />投料：子板是芯板开料的需勾选</Note>
        <SubGrid>
          <table style={{ width: 179 }}>
            <colgroup><col style={{ width: 74 }} /><col style={{ width: 50 }} /><col style={{ width: 40 }} /><col /></colgroup>
            <thead><tr><Th>子板型号</Th><Th>工单</Th><Th>投料</Th><Th $blank /></tr></thead>
            <tbody>
              {[["2V0065IRA0", "2/3A"], ["2V0065ISA0", "4/5A"], ["2V0065ITA0", "6/7A"], ["2V0065IUA0", "8/9A"], ["2V0065IVA0", "10/11A"]].map((r, i) => (
                <tr key={r[0]}><Td $center $bg={i ? "#fff" : "#afd2f7"}>{r[0]}</Td><Td $center>{r[1]}</Td>
                  <Td $center><Check type="checkbox" defaultChecked disabled aria-label={`投料 ${r[0]}`} /></Td><Td /></tr>
              ))}
            </tbody>
          </table>
          <ThinScroll>
            <svg width="5" height="5"><path d="M0 5h5V0z" fill="#555" /></svg><i /><svg width="5" height="5"><path d="M0 0h5v5z" fill="#555" /></svg>
          </ThinScroll>
        </SubGrid>
      </DevicePanel>
      <VSplit $w={7} style={{ justifyContent: "flex-start", paddingTop: 340 }}><SideCaret /><Dots $v /><SideCaret /></VSplit>
      <FlowPane>
        <FlowMain>
          <FlowClip>
            <FlowTable><FlowCols /><thead><tr><Fh $p={0}>流程</Fh><Fh $p={8}>BOM工厂</Fh><Fh $p={8}>编写人</Fh><Fh $p={8}>核审人</Fh><Fh $p={8}>状态</Fh></tr></thead></FlowTable>
            <FlowRows>
              <FlowTable><FlowCols /><tbody>
                {rows.map((r, i) => (
                  <tr key={i}>
                    <Fd><FlowName>
                      {r.folder ? <FolderGuide /> : <LeafGuide last={r.last} />}
                      <FlowLabel $sel={r.sel} $leaf={!r.folder}>{r.folder ? <Folder /> : <DocIcon />}{r.name}</FlowLabel>
                    </FlowName></Fd>
                    <Fd $sel={r.sel}>{r.name && "P10"}</Fd><Fd $sel={r.sel}>{r.name && "刘龙根"}</Fd><Fd $sel={r.sel}>{r.name && "方幸幸"}</Fd><Fd $sel={r.sel}>{r.name && "已审核"}</Fd>
                  </tr>
                ))}
              </tbody></FlowTable>
            </FlowRows>
          </FlowClip>
          <VBar><svg width="9" height="5"><path d="M0 5h9L4.500 0z" fill="#444" /></svg><b /></VBar>
        </FlowMain>
        <HBar><svg width="5" height="9"><path d="M5 0v9L0 4.500z" fill="#444" /></svg><b><i /></b></HBar>
      </FlowPane>
    </FlowBody>
  </FlowGroup>
);

const Info = () => (
  <Right>
    <InfoTabs>
      <InfoTab $on $l={6}>基本信息</InfoTab><InfoTab $l={8}>BOM</InfoTab><InfoTab $l={21}>工时</InfoTab><InfoTab $l={21}>产品特性</InfoTab>
      <InfoTab $l={22}>文本配方</InfoTab><InfoTab $l={22}>设备配方</InfoTab>
    </InfoTabs>
    <Panes>
      <Pane $w={377}>
        <PaneTabs><PaneTab><SlantTab id="st1" /><span>基本参数</span></PaneTab></PaneTabs>
        <PaneBody>
          <table style={{ width: "100%", alignSelf: "flex-start" }}>
            <colgroup><col style={{ width: 34 }} /><col style={{ width: 82 }} /><col style={{ width: 143 }} /><col style={{ width: 29 }} /><col style={{ width: 29 }} /><col /></colgroup>
            <thead><tr><Th $h={33}><Corner /></Th><Th>项目</Th><Th>参数</Th><Th>单位</Th><Th>修改</Th><Th $blank /></tr></thead>
            <tbody>
              <tr><Td $bg="#dbe6f3"><RowMark /></Td><Td $bg="#afd2f7" $color="#b0149c">通孔厚径比</Td><Td>6.28</Td><Td $bg="#e6f0fb" /><Td>N</Td><Td /></tr>
              <tr><Td $bg="#dbe6f3" /><Td $bg="#f1f1f1">是否跳过除胶</Td><Td $bg="#f1f1f1">N</Td><Td $bg="#f1f1f1" /><Td $bg="#f1f1f1">N</Td><Td /></tr>
            </tbody>
          </table>
        </PaneBody>
      </Pane>
      <VSplit $w={6} />
      <Pane>
        <PaneTabs><PaneTab><SlantTab id="st2" /><span>工艺备注</span></PaneTab></PaneTabs>
        <PaneBody>
          <Memo $w={198}><MemoHead htmlFor="m1">工艺备注</MemoHead>
            <MemoBody><MemoText id="m1" readOnly /><MemoScroll><svg width="8" height="5"><path d="M0 5l4-4 4 4" fill="none" stroke="#b5b5b5" strokeWidth="2" /></svg></MemoScroll></MemoBody></Memo>
          <Memo><MemoHead htmlFor="m2">型号备注</MemoHead><MemoBody><MemoText id="m2" readOnly defaultValue={notes} /></MemoBody></Memo>
        </PaneBody>
      </Pane>
    </Panes>
  </Right>
);

const C = () => <Caret $c="#5d7fb5" />;
const Word = () => (
  <WordWin>
    <OfficeButton aria-label="Office"><OfficeLogo /></OfficeButton>
    <TitleBar>
      <Quick>
        <QuickPill>
          <svg width="15" height="15" viewBox="0 0 15 15"><path d="M1 1h13v13H1z" fill="#4b4fb5" /><path d="M3 1h9v6H3z" fill="#eef3fb" /><path d="M4 10h7v4H4z" fill="#cfd4e6" /></svg>
          <svg width="13" height="14" viewBox="0 0 13 14"><path d="M3 5q7-5 8 1 0 4-5 7" fill="none" stroke="#aab2bf" strokeWidth="2.500" /><path d="M0 1v7h7z" fill="#aab2bf" /></svg>
          <Caret $c="#a5a5a5" />
          <svg width="14" height="14" viewBox="0 0 14 14"><path d="M3 3q-4 9 4 9t4-8" fill="none" stroke="#3b6cc4" strokeWidth="2.500" /><path d="M7 1h6l-3 5z" fill="#3b6cc4" /></svg>
          <svg width="17" height="15" viewBox="0 0 17 15"><path d="M1 3h5l1 2h6v8H1z" fill="#c98d1e" /><path d="M4 7h12l-3 7H1z" fill="#f8c95a" stroke="#a8741a" strokeWidth=".6" /><path d="M9 2q4-2 6 1" fill="none" stroke="#444" /></svg>
        </QuickPill>
        <svg width="7" height="8" viewBox="0 0 7 8"><path d="M0 .5h7M0 3h7L3.500 7z" stroke="#15428b" strokeWidth=".8" fill="#15428b" /></svg>
      </Quick>
      <span>V006-71 [兼容模式] - Microsoft Word</span>
      <WinButtons>
        <button aria-label="最小化"><svg width="10" height="10"><path d="M0 5.500h10" stroke="#000" /></svg></button>
        <button aria-label="最大化"><svg width="10" height="10"><rect x=".5" y=".5" width="9" height="9" fill="none" stroke="#000" /></svg></button>
        <button aria-label="关闭"><svg width="11" height="11"><path d="M.5.5l10 10M10.500.5l-10 10" stroke="#000" /></svg></button>
      </WinButtons>
    </TitleBar>
    <RibbonTabs>
      {["开始", "插入", "页面布局", "引用", "邮件", "审阅", "视图", "Acrobat"].map((t, i) => <RibbonTab key={t} $on={!i}>{t}</RibbonTab>)}
      <HelpSlot aria-label="帮助"><svg width="15" height="15" viewBox="0 0 15 15"><circle cx="7.500" cy="7.500" r="6.500" fill="#2c62c8" stroke="#a8c6f2" strokeWidth="1.500" /><path d="M5.500 6q0-2 2-2t2 1.700q0 1-1.900 2.300v1M7.500 10v1.500" fill="none" stroke="#fff" strokeWidth="1.300" /></svg></HelpSlot>
    </RibbonTabs>
    <Ribbon>
      <RGroup $w={72}>
        <RBody style={{ padding: "4px 0 0 10px", gap: 10 }}>
          <Stack>
            <svg width="27" height="31" viewBox="0 0 27 31"><path d="M1 3h24v26H1z" fill="#f0b552" stroke="#b07c28" /><path d="M7 1h11v5H7z" fill="#d8dbe0" stroke="#777" /><path d="M10 12h10l6 5v13H10z" fill="#fff" stroke="#7d94b8" /><path d="M12 18h10M12 21h11M12 24h11M12 27h11" stroke="#9fb3d4" /></svg>
            <span style={{ marginTop: 4 }}>粘贴</span><Caret $top={6} $c="#5d7fb5" />
          </Stack>
          <IconCol>
            <button aria-label="剪切"><svg width="16" height="16" viewBox="0 0 16 16"><path d="M5 0l4 9M11 0L6 10" stroke="#5b6b80" strokeWidth="1.500" /><circle cx="5" cy="12" r="2.200" fill="none" stroke="#2b4fae" strokeWidth="1.500" /><circle cx="10.500" cy="12" r="2.200" fill="none" stroke="#2b4fae" strokeWidth="1.500" /></svg></button>
            <button aria-label="复制"><svg width="16" height="16" viewBox="0 0 16 16"><path d="M1 2h7l2 2v7H1z" fill="#fff" stroke="#4169b0" /><path d="M6 6h7l2 2v7H6z" fill="#fff" stroke="#4169b0" /><path d="M8 9h4M8 11h5M8 13h5" stroke="#6d90cf" /></svg></button>
            <button aria-label="格式刷"><svg width="16" height="16" viewBox="0 0 16 16"><path d="M15 1l-5 6" stroke="#6b4a8c" strokeWidth="2.500" /><path d="M1 8l8-3 3 4-5 6z" fill="#f3d774" stroke="#a8842a" /></svg></button>
          </IconCol>
        </RBody>
        <RCap><span>剪贴板</span><Launch /></RCap>
      </RGroup>
      <RGroup $w={315}>
        <RBody $col style={{ paddingTop: 8, gap: 12 }}>
          <RRow>
            <div style={{ display: "flex" }}>
              <ComboWrap><Combo $w={124} aria-label="字体"><option></option></Combo><C /></ComboWrap>
              <ComboWrap><Combo $w={54} aria-label="字号"><option>五号</option></Combo><C /></ComboWrap>
            </div>
            <RCluster><RBtn $w={22}><G $s={16}>A<sup>▴</sup></G></RBtn><RBtn $w={21}><G $s={13}>A<sup>▾</sup></G></RBtn></RCluster>
            <RCluster><RBtn aria-label="清除格式"><svg width="17" height="16" viewBox="0 0 17 16"><path d="M1 8l2-6h1l2 6M2 6h3M8 2v6h3V5H8" fill="none" stroke="#333" /><path d="M7 11l6-6 3 3-6 6H8z" fill="#f4f4fb" stroke="#667" /></svg></RBtn></RCluster>
            <RCluster><RBtn style={{ flexDirection: "column", gap: 0 }}><G $s={9} style={{ lineHeight: "8px" }}>wén</G><G $s={11} $c="#1c4fb0" style={{ lineHeight: "11px" }}>文</G></RBtn></RCluster>
            <RCluster><RBtn><G $s={14} style={{ border: "1px solid #333", lineHeight: "14px", padding: "0 1px" }}>A</G></RBtn></RCluster>
          </RRow>
          <RRow>
            <RCluster>
              <RBtn $w={22}><G>B</G></RBtn><RBtn $w={24}><G $i>I</G></RBtn><RBtn $w={36}><G $u>U</G><C /></RBtn><RBtn $w={26}><G $s={12} $x>abc</G></RBtn>
              <RBtn $w={23}><G $s={14}>x<sub>2</sub></G></RBtn><RBtn $w={22}><G $s={14}>x<sup>2</sup></G></RBtn><RBtn $w={28} style={{ gap: 1 }}><G $s={14}>Aa</G><C /></RBtn>
            </RCluster>
            <RCluster>
              <RBtn $w={33}><G $s={12} $b={false} style={{ borderBottom: "4px solid #ff0", lineHeight: "13px", padding: "0 2px" }}>ab</G><C /></RBtn>
              <RBtn $w={32}><G $s={15} $c="#2b5288" style={{ borderBottom: "4px solid #000", lineHeight: "13px", padding: "0 2px" }}>A</G><C /></RBtn>
            </RCluster>
            <RCluster><RBtn><G style={{ background: "#b5b5b5", lineHeight: "15px", padding: "0 1px" }}>A</G></RBtn></RCluster>
            <RCluster><RBtn><G $s={10} $b={false} style={{ border: "1px solid #222", borderRadius: 9, lineHeight: "14px", padding: "0 2px" }}>字</G></RBtn></RCluster>
          </RRow>
        </RBody>
        <RCap><span>字体</span><Launch /></RCap>
      </RGroup>
      <RGroup $w={245}>
        <RBody $col style={{ paddingTop: 11, gap: 12 }}>
          <RRow>
            <RCluster><RBtn $w={34}><ListIcon n={0} /><C /></RBtn><RBtn $w={34}><ListIcon n={1} /><C /></RBtn><RBtn $w={29}><ListIcon n={2} /><C /></RBtn></RCluster>
            <RCluster><RBtn $w={21} aria-label="减少缩进"><Indent /></RBtn><RBtn $w={21} aria-label="增加缩进"><Indent r /></RBtn></RCluster>
            <RCluster><RBtn $w={29}><svg width="16" height="14" viewBox="0 0 16 14"><path d="M2 13l5-9h2l5 9M5 9h6" fill="none" stroke="#111" strokeWidth="1.500" /><path d="M1 2h4M3 .5v3M11 2h4M13 .5v3" stroke="#2b5fb8" /></svg><C /></RBtn></RCluster>
            <RCluster><RBtn aria-label="排序"><svg width="16" height="18" viewBox="0 0 16 18"><path d="M1 8l3-7 3 7M2 6h4" fill="none" stroke="#2b5fb8" strokeWidth="1.300" /><path d="M1 10h5l-5 6h6" fill="none" stroke="#a03a3a" strokeWidth="1.300" /><path d="M12 1v14M9.500 12l2.500 3 2.500-3" fill="none" stroke="#111" /></svg></RBtn></RCluster>
            <RCluster><RBtn $w={21} aria-label="显示标记"><svg width="11" height="14" viewBox="0 0 11 14"><path d="M9 1v5H3M5 4L3 6l2 2M1 10h6M5 8l2 2-2 2" fill="none" stroke="#111" strokeWidth="1.200" /></svg></RBtn></RCluster>
          </RRow>
          <RRow>
            <RCluster><RBtn $on $w={23} aria-label="左对齐"><Lines m="l" /></RBtn><RBtn $w={24} aria-label="居中"><Lines m="c" /></RBtn><RBtn $w={24} aria-label="右对齐"><Lines m="r" /></RBtn><RBtn $w={24} aria-label="两端对齐"><Lines m="j" /></RBtn><RBtn $w={21} aria-label="分散对齐"><Lines m="d" /></RBtn></RCluster>
            <RCluster><RBtn $w={30} aria-label="行距"><svg width="16" height="14" viewBox="0 0 16 14"><path d="M3 1v12M1 3.500L3 1l2 2.500M1 10.500L3 13l2-2.500" fill="none" stroke="#2b5fb8" /><path d="M8 2h8M8 5h8M8 8h8M8 11h8" stroke="#111" /></svg><C /></RBtn></RCluster>
            <RCluster><RBtn $w={33} aria-label="底纹"><svg width="15" height="16" viewBox="0 0 15 16"><path d="M2 7l5-5 5 5-5 4z" fill="#fff" stroke="#4b6b9c" /><path d="M12 7q3 4 0 4z" fill="#2b5fb8" /><path d="M0 14h14" stroke="#dfe6ef" strokeWidth="3" /></svg><C /></RBtn><RBtn $w={31} aria-label="边框"><svg width="13" height="13"><path d="M.5 0v13M6.500 0v13M12.500 0v13M0 .5h13M0 6.500h13" stroke="#777" strokeDasharray="1 1" /><path d="M0 12.500h13" stroke="#222" /></svg><C /></RBtn></RCluster>
          </RRow>
        </RBody>
        <RCap><span>段落</span><Launch /></RCap>
      </RGroup>
      <RGroup $w={298}>
        <RBody style={{ padding: "4px 0 0 4px", gap: 3 }}>
          <Gallery>
            <StyleCard><Sample $s={20}>AaBbC</Sample>标题</StyleCard>
            <StyleCard><Sample $s={25}>AaBb</Sample>标题 1</StyleCard>
            <StyleCard><Sample $s={20}>AaBbC</Sample>副标题</StyleCard>
            <GScroll><button aria-label="上一行"><Caret $c="#b5b5b5" style={{ transform: "rotate(180deg)" }} /></button><button aria-label="下一行"><C /></button><button aria-label="更多"><C /></button></GScroll>
          </Gallery>
          <Stack>
            <svg width="31" height="31" viewBox="0 0 31 31"><path d="M2 18L9 2l6 14M5 12h8" fill="none" stroke="#b45cc0" strokeWidth="3" /><path d="M9 29L19 7l9 22M13 22h12" fill="none" stroke="#4a86d8" strokeWidth="3.500" /><path d="M7 29h6M24 29h6" stroke="#2d62ae" strokeWidth="2" /></svg>
            <span style={{ marginTop: 4 }}>更改样式</span><Caret $top={6} $c="#5d7fb5" />
          </Stack>
        </RBody>
        <RCap><span>样式</span><Launch /></RCap>
      </RGroup>
      <RGroup $w={68}>
        <RBody $col style={{ padding: "0 0 0 6px" }}>
          <EditBtn><svg width="16" height="14" viewBox="0 0 16 14"><path d="M3 1h3v5H3zM10 1h3v5h-3zM6 5h4v3H6zM1 6h5v7H1zM10 6h5v7h-5z" fill="#6b8fcb" stroke="#294a85" /></svg>查找<C /></EditBtn>
          <EditBtn><G $s={9} style={{ width: 16, lineHeight: "8px", whiteSpace: "normal", textAlign: "left" }}>ab <span style={{ color: "#169c2c" }}>ac</span></G>替换</EditBtn>
          <EditBtn><svg width="16" height="15" viewBox="0 0 16 15"><path d="M4 1v11l3-3 2 5 2-1-2-4h4z" fill="#fff" stroke="#555" /></svg>选择<C /></EditBtn>
        </RBody>
        <RCap><span>编辑</span></RCap>
      </RGroup>
    </Ribbon>
    <DocArea>
      <svg width="126" height="160"><path d="M0 118Q60 90 126 74V84Q60 104 0 148z" fill="#fff" opacity=".1" /><path d="M0 148Q60 104 126 84" fill="none" stroke="#fff" opacity=".25" /></svg>
      <Paper>
        <Crops><i /><i /></Crops>
        <Para><b>12.白油块要求</b><Ret /></Para>
        <Para $in={5}>除了线路上和过孔上的白油块，其他地方的白油块都需要保持平整，无褶皱，无缺损。<Ret /></Para>
        <Para><Sel><b>13.阻焊套印：</b>完成<u>铜厚或者基</u>铜＜2OZ 的板不允许阻焊套印</Sel><Ret /><Callout /></Para>
        <Para $mt={8}><Ret /></Para>
        <Para $mt={6} $h={33} $low><Mark><strong>终端顾客：</strong><u>eCircuit</u><em>,</em>终端顾客代码为：V006-0001</Mark><Ret /></Para>
        <Para $mt={8} $h={21} $in={55}>要求按照通用的拼板的方式制作，见附件。<Ret /></Para>
        <Para $h={21}><Ret /></Para>
        <Attach>
          <a href="#ecircuits">
            <svg width="32" height="31" viewBox="0 0 32 31"><path d="M9 1h14l8 8v21H9z" fill="#e6e6e6" stroke="#8a8a8a" /><path d="M23 1v8h8z" fill="#fff" stroke="#999" /><rect y="3" width="21" height="9" fill="#d2191c" /><path d="M11 27q8-6 7-12 2 8 11 8-10-1-18 4z" fill="none" stroke="#d9434a" strokeWidth="1.500" /><text x="3" y="10" fontSize="7" fontWeight="bold" fill="#fff" fontFamily="Liberation Sans, sans-serif">PDF</text><text x="14" y="28" fontSize="6" fontWeight="bold" fill="#222" fontFamily="Liberation Sans, sans-serif">Adobe</text></svg>
            <span>E:\wjys\<br />eCircuits.pdf</span>
          </a>
          <Ret />
        </Attach>
        <Para $mt={15} $h={18}><Ret /></Para>
        <Para $h={33} $low><Mark><strong>终端顾客：</strong><Space />终端顾客代码为：V006-0001</Mark></Para>
      </Paper>
      <WordScroll>
        <svg width="10" height="2"><path d="M0 1h10" stroke="#223" strokeWidth="2" /></svg>
        <svg width="12" height="12" viewBox="0 0 12 12"><path d="M1 1h10v7L8 11 5 8H1z" fill="#eef3fb" stroke="#445" /><path d="M3 3h5M3 5h3" stroke="#667" /></svg>
        <Track><svg width="8" height="4"><path d="M0 4h8L4 0z" fill="#1f3c70" /></svg><b><i /></b></Track>
      </WordScroll>
    </DocArea>
  </WordWin>
);

export default function App() {
  return (
    <Desktop>
      <Global />
      <Left />
      <Gutter />
      <Main>
        <Top />
        <Lower><Flow /><VSplit $w={5} /><Info /></Lower>
      </Main>
      <Word />
      <Activate><strong>激活 Windows</strong>转到“设置”以激活 Windows。</Activate>
    </Desktop>
  );
}
